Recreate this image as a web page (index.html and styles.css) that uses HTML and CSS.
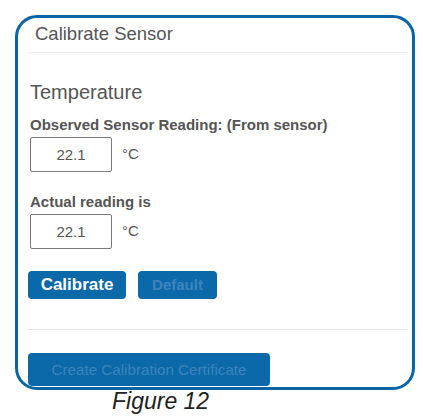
FILE: index.html
```html
<!DOCTYPE html>
<html lang="en">
<head>
  <meta charset="UTF-8">
  <meta name="viewport" content="width=device-width, initial-scale=1.0">
  <title>Calibrate Sensor</title>
  <link rel="stylesheet" href="styles.css">
</head>
<body>

  <div class="card">
    <div class="card-header">Calibrate Sensor</div>

    <div class="card-body">
      <h2>Temperature</h2>

      <label class="field-label">Observed Sensor Reading: (From sensor)</label>
      <div class="field-row">
        <input type="text" class="reading" value="22.1">
        <span class="unit">°C</span>
      </div>

      <label class="field-label second">Actual reading is</label>
      <div class="field-row">
        <input type="text" class="reading" value="22.1">
        <span class="unit">°C</span>
      </div>

      <div class="buttons">
        <button class="btn btn-main">Calibrate</button>
        <button class="btn btn-off" disabled>Default</button>
      </div>

      <hr class="divider">

      <button class="btn btn-cert" disabled>Create Calibration Certificate</button>
    </div>
  </div>

  <p class="caption">Figure 12</p>

</body>
</html>
```

FILE: styles.css
```css
body {
  margin: 0;
  font-family: 'Liberation Sans', Arial, sans-serif;
  background-color: #fff;
  color: #555;
}

.card {
  margin: 15px 0 0 15px;
  width: 400px;
  height: 375px;
  box-sizing: border-box;
  border: 3px solid #0b65a5;
  border-radius: 22px;
  overflow: hidden;
}

.card-header {
  margin: 0 4px 0 10px;
  padding: 5px 0 7px 7px;
  font-size: 18.5px;
  line-height: 22px;
  border-bottom: 1px solid #ececec;
}

.card-body {
  padding: 0 4px 0 10px;
}

.card-body h2 {
  margin: 27px 0 0 2px;
  font-size: 20px;
  font-weight: normal;
  line-height: 24px;
}

.field-label {
  display: block;
  margin: 12px 0 0 2px;
  font-size: 15px;
  font-weight: bold;
  line-height: 18px;
}

.field-label.second {
  margin-top: 21.5px;
}

.field-row {
  display: flex;
  align-items: center;
  gap: 10px;
  margin: 2.5px 0 0 2px;
}

.reading {
  width: 82px;
  height: 35px;
  box-sizing: border-box;
  border: 1px solid #7a7a7a;
  border-radius: 2px;
  padding: 0;
  font-family: inherit;
  font-size: 15px;
  color: #555;
  text-align: center;
}

.unit {
  font-size: 15px;
  margin-top: -2px;
}

.buttons {
  display: flex;
  gap: 12px;
  margin-top: 22px;
}

.btn {
  background-color: #0b69aa;
  border: none;
  border-radius: 4px;
  font-family: inherit;
  font-weight: bold;
  padding: 0;
  cursor: pointer;
}

.btn-main {
  width: 98px;
  height: 28px;
  color: #fff;
  font-size: 17px;
}

.btn-off {
  width: 79px;
  height: 28px;
  color: #3d84bd;
  font-size: 15px;
  cursor: default;
}

.divider {
  margin: 30px 0 0 0;
  border: none;
  border-top: 1px solid #e6e6e6;
}

.btn-cert {
  display: block;
  margin-top: 23px;
  width: 242px;
  height: 33px;
  color: #3d84bd;
  font-size: 15.2px;
  font-weight: normal;
  cursor: default;
}

.caption {
  margin: -2px 0 0 112px;
  font-size: 23px;
  font-style: italic;
  line-height: 26px;
  color: #222;
}
```
